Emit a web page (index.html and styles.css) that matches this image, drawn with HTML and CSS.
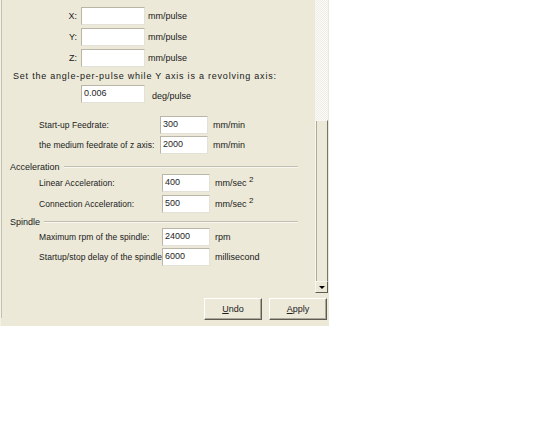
FILE: index.html
```html
<!DOCTYPE html>
<html>
<head>
<meta charset="utf-8">
<link rel="stylesheet" href="styles.css">
</head>
<body>
<div class="dialog">
  <div class="frame">
    <div class="panel">
      <div class="content">
        <div class="row r21">
          <span class="lab-a">X:</span><span class="field fa"></span><span class="unit ua">mm/pulse</span>
        </div>
        <div class="row r21">
          <span class="lab-a">Y:</span><span class="field fa"></span><span class="unit ua">mm/pulse</span>
        </div>
        <div class="row r21">
          <span class="lab-a">Z:</span><span class="field fa"></span><span class="unit ua">mm/pulse</span>
        </div>
        <div class="row r16 note">Set the angle-per-pulse while Y axis is a revolving axis:</div>
        <div class="row r20 angle">
          <span class="field fa">0.006</span><span class="unit ud">deg/pulse</span>
        </div>
        <div class="row r20 feed first">
          <span class="lab-b">Start-up Feedrate:</span><span class="field fb">300</span><span class="unit ub">mm/min</span>
        </div>
        <div class="row r20 feed">
          <span class="lab-b">the medium feedrate of z axis:</span><span class="field fb">2000</span><span class="unit ub">mm/min</span>
        </div>
        <div class="group g-acc">
          <span class="gtitle">Acceleration</span><span class="gline"></span>
        </div>
        <div class="row r20 feed">
          <span class="lab-c">Linear Acceleration:</span><span class="field fb">400</span><span class="unit uc">mm/sec <sup>2</sup></span>
        </div>
        <div class="row r21 feed">
          <span class="lab-c">Connection Acceleration:</span><span class="field fb">500</span><span class="unit uc">mm/sec <sup>2</sup></span>
        </div>
        <div class="group g-sp">
          <span class="gtitle">Spindle</span><span class="gline"></span>
        </div>
        <div class="row r20 feed">
          <span class="lab-c">Maximum rpm of the spindle:</span><span class="field fb">24000</span><span class="unit ub">rpm</span>
        </div>
        <div class="row r20 feed">
          <span class="lab-c">Startup/stop delay of the spindle:</span><span class="field fb">6000</span><span class="unit ub">millisecond</span>
        </div>
      </div>
      <div class="scrollbar">
        <div class="track"></div>
        <div class="thumb"></div>
        <div class="arrow"><span class="tri"></span></div>
      </div>
    </div>
    <div class="buttons">
      <div class="btn"><u>U</u>ndo</div>
      <div class="btn"><u>A</u>pply</div>
    </div>
  </div>
</div>
</body>
</html>
```

FILE: styles.css
```css
html, body {
  margin: 0;
  padding: 0;
  background: #ffffff;
}

body {
  font-family: "Liberation Sans", Arial, sans-serif;
  font-size: 9px;
  color: #202020;
}

.dialog {
  width: 328px;
  height: 326px;
  background: #ECE9D8;
  border-left: 1px solid #F3F1E8;
}

.frame {
  width: 326px;
  height: 318px;
  border-left: 1px solid #C3C0B0;
  display: flex;
  flex-direction: column;
}

.panel {
  height: 293px;
  flex: none;
  display: flex;
  flex-direction: row;
}

.content {
  flex: 1;
  padding-top: 5px;
  display: flex;
  flex-direction: column;
}

.row {
  display: flex;
  align-items: center;
  white-space: nowrap;
}

.r21 { height: 21px; }
.r20 { height: 20px; }
.r16 { height: 16px; }

.lab-a {
  width: 77px;
  text-align: right;
  padding-right: 2px;
  box-sizing: border-box;
}

.field {
  display: block;
  height: 18px;
  box-sizing: border-box;
  background: #ffffff;
  border-top: 1px solid #B9B6A8;
  border-left: 1px solid #B9B6A8;
  border-right: 1px solid #E4E2D8;
  border-bottom: 1px solid #E4E2D8;
  padding: 1px 0 0 2px;
  line-height: 12px;
  color: #252525;
}

.fa {
  width: 64px;
  margin-left: 2px;
}

.fb {
  width: 48px;
}

.unit {
  display: block;
}

.ua { margin-left: 3px; }
.ud { margin-left: 7px; padding-top: 4px; }
.ub { margin-left: 5px; }
.uc { margin-left: 5px; }

.unit sup {
  font-size: 8px;
  position: relative;
  top: -2px;
  vertical-align: top;
  line-height: 8px;
}

.note {
  padding-left: 11px;
  letter-spacing: 0.78px;
}

.angle {
  padding-left: 77px;
}

.feed {
  padding-left: 37px;
}

.first {
  margin-top: 11px;
}

.lab-b,
.lab-c {
  font-size: 8.5px;
  letter-spacing: 0.05px;
}

.lab-b {
  width: 121px;
}

.lab-c {
  width: 123px;
}

.group {
  display: flex;
  align-items: center;
  padding-left: 8px;
  padding-right: 17px;
}

.g-acc { height: 12px; margin-top: 6px; }
.g-sp { height: 10px; margin-top: 3px; }

.gtitle {
  white-space: nowrap;
}

.gline {
  flex: 1;
  height: 0;
  border-top: 1px solid #C2BFB0;
  border-bottom: 1px solid #F8F7F1;
}

.g-acc .gline { margin-left: 4px; }
.g-sp .gline { margin-left: 4px; }

.scrollbar {
  width: 13px;
  display: flex;
  flex-direction: column;
}

.track {
  height: 120px;
  background-color: #F6F5F0;
  background-image: repeating-conic-gradient(#EFEEE7 0 25%, #FBFAF6 0 50%);
  background-size: 2px 2px;
}

.thumb {
  flex: 1;
  background: #ECE9D8;
  border-top: 1px solid #F7F6F0;
  border-left: 1px solid #F7F6F0;
  border-right: 1px solid #77756A;
  box-shadow: inset 1px 0 0 #ADAA9B;
}

.arrow {
  height: 12px;
  box-sizing: border-box;
  background: #ECE9D8;
  border-top: 1px solid #F7F6F0;
  border-left: 1px solid #F7F6F0;
  border-right: 1px solid #5E5C53;
  border-bottom: 1px solid #5E5C53;
  display: flex;
  align-items: center;
  justify-content: center;
}

.tri {
  width: 0;
  height: 0;
  border-left: 3px solid transparent;
  border-right: 3px solid transparent;
  border-top: 3px solid #000;
}

.buttons {
  display: flex;
  justify-content: flex-end;
  gap: 7px;
  padding-top: 5px;
  padding-right: 1px;
}

.btn {
  width: 58px;
  height: 22px;
  box-sizing: border-box;
  background: #ECE9D8;
  border-top: 1px solid #FFFFFF;
  border-left: 1px solid #FFFFFF;
  border-right: 1px solid #5E5C53;
  border-bottom: 1px solid #5E5C53;
  box-shadow: inset -1px -1px 0 #ACA899;
  display: flex;
  align-items: center;
  justify-content: center;
  color: #202020;
}
```
